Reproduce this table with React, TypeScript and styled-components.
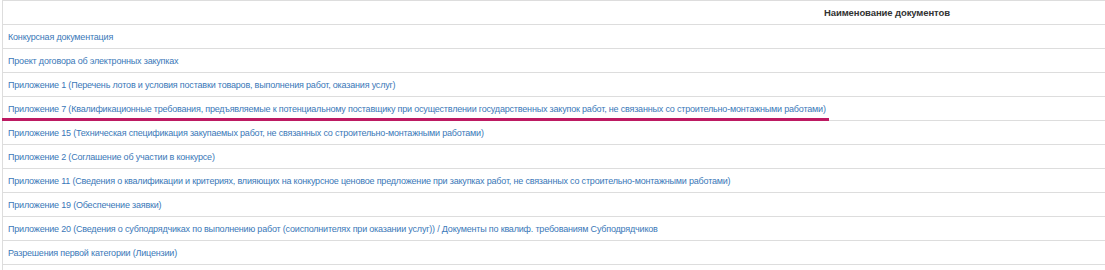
import React from "react";
import styled, { createGlobalStyle } from "styled-components";

const GlobalStyle = createGlobalStyle`
  html, body {
    margin: 0;
    padding: 0;
    background: #ffffff;
    overflow: hidden;
  }
  body {
    font-family: "Liberation Sans", Arial, sans-serif;
  }
`;

const documents = [
  "Конкурсная документация",
  "Проект договора об электронных закупках",
  "Приложение 1 (Перечень лотов и условия поставки товаров, выполнения работ, оказания услуг)",
  "Приложение 7 (Квалификационные требования, предъявляемые к потенциальному поставщику при осуществлении государственных закупок работ, не связанных со строительно-монтажными работами)",
  "Приложение 15 (Техническая спецификация закупаемых работ, не связанных со строительно-монтажными работами)",
  "Приложение 2 (Соглашение об участии в конкурсе)",
  "Приложение 11 (Сведения о квалификации и критериях, влияющих на конкурсное ценовое предложение при закупках работ, не связанных со строительно-монтажными работами)",
  "Приложение 19 (Обеспечение заявки)",
  "Приложение 20 (Сведения о субподрядчиках по выполнению работ (соисполнителях при оказании услуг)) / Документы по квалиф. требованиям Субподрядчиков",
  "Разрешения первой категории (Лицензии)",
];

const HIGHLIGHTED = 3;

function App() {
  return (
    <>
      <GlobalStyle />
      <Page>
        <Table>
          <HeaderRow>
            <HeaderCell>Наименование документов</HeaderCell>
          </HeaderRow>
          {documents.map((doc, i) => (
            <Row key={i}>
              <DocLink href="#" $marked={i === HIGHLIGHTED}>
                {doc}
              </DocLink>
            </Row>
          ))}
          <Row />
        </Table>
      </Page>
    </>
  );
}

const Page = styled.div`
  width: 1105px;
  height: 270px;
  overflow: hidden;
`;

const Table = styled.div`
  width: 1768px;
  margin-left: 2px;
  display: flex;
  flex-direction: column;
  border-top: 1px solid #dddddd;
  border-left: 1px solid #dddddd;
`;

const HeaderRow = styled.div`
  height: 23px;
  display: flex;
  align-items: center;
  justify-content: center;
  border-bottom: 1px solid #dddddd;
`;

const HeaderCell = styled.div`
  font-size: 9.5px;
  font-weight: bold;
  letter-spacing: -0.1px;
  color: #333333;
`;

const Row = styled.div`
  height: 23px;
  display: flex;
  align-items: center;
  padding-left: 5px;
  border-bottom: 1px solid #dddddd;
  position: relative;
`;

const DocLink = styled.a<{ $marked?: boolean }>`
  font-size: 9px;
  letter-spacing: -0.19px;
  color: #3a78b8;
  text-decoration: none;
  white-space: nowrap;
  position: relative;

  ${(p) =>
    p.$marked &&
    `
    &::after {
      content: "";
      position: absolute;
      left: -6px;
      right: -3px;
      bottom: -7px;
      height: 3px;
      background: #bd1a62;
    }
  `}
`;

export default App;
